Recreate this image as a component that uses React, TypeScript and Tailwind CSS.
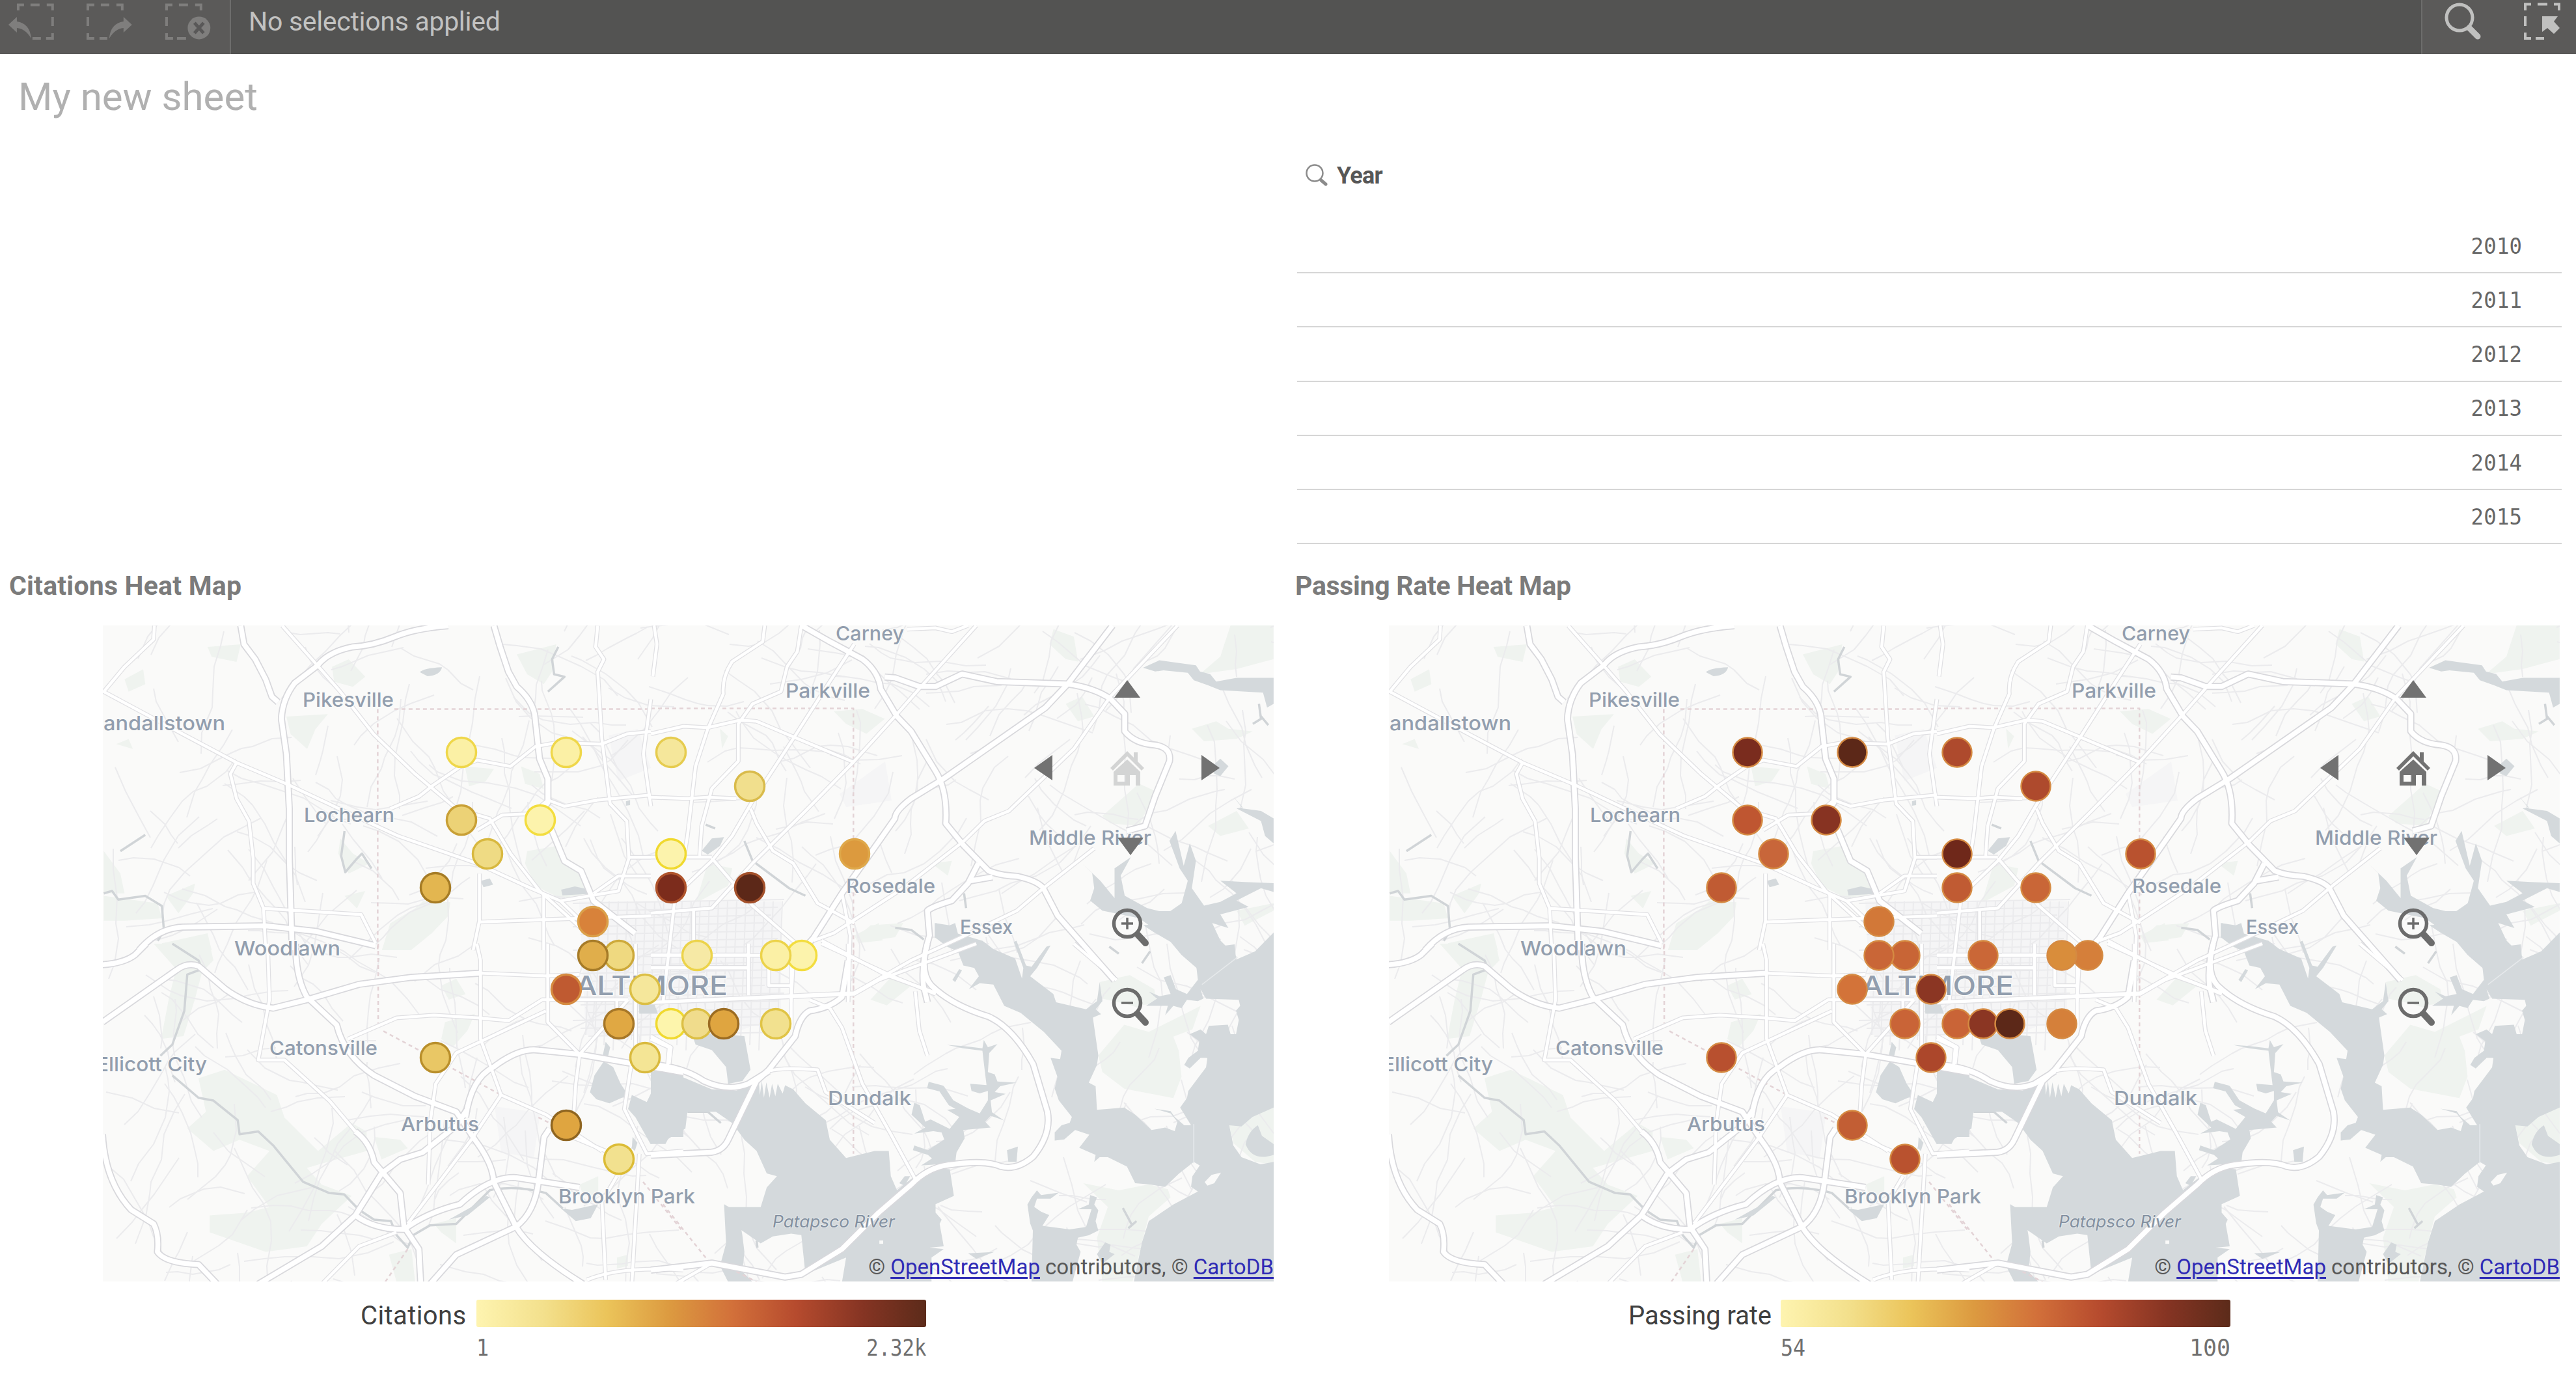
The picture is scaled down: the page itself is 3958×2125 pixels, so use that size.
import React from "react";

type Sheet = {
  t: string;
  major: string[];
  minor: string[];
  dashed: string[];
  water: string[];
  creek: string[];
  inlet: string[];
  green: string[];
};

/* The base map is stored as sheets, each with its own local units. */
const sheets: Sheet[] = [
  {
    t: "translate(0 860) scale(.63776 .38265)",
    major: [
      "M580 265L588 340L615 400L640 480L655 550L670 572",
      "M1080 265Q1000 275 950 310T850 350Q790 370 765 425L710 495Q680 560 678 640L690 780L697 1000V1200L704 1568",
      "M1190 265L1205 350L1225 450L1245 510Q1280 560 1288 620L1300 800L1320 880L1320 975L1305 1010L1330 1090L1360 1210L1400 1250L1430 1370L1530 1500",
      "M335 1568Q380 1480 440 1475L640 1470L760 1492L905 1550",
    ],
    minor: [
      "M372 265L370 320L300 430L250 530L440 700L570 815L690 900L830 1010L960 1110L1150 1220L1280 1320L1350 1370L1400 1450",
      "M680 265L765 425L820 530L900 700L1000 860L1100 1000L1180 1040L1230 1180L1300 1330L1400 1480",
      "M570 815L555 860L570 960L600 1050L610 1200V1300L635 1400L640 1568",
      "M635 1400L870 1425L905 1540",
      "M1440 265L1435 350L1455 400L1440 450L1450 720L1470 980L1510 1050L1515 1200L1490 1330L1420 1350L1350 1370",
      "M940 1000L1010 950L1040 910L1110 830L1150 805L1230 830L1290 750L1340 735L1450 740L1510 700L1568 690",
      "M1150 1085L1210 1025L1280 1020L1320 965L1360 990L1440 965L1568 945",
      "M1155 1260V1450L1140 1568",
      "M1155 1455L1310 1445L1568 1430M1310 1340V1568M1430 1340L1490 1270H1568M1515 1195H1568",
      "M1568 560L1550 780L1568 990",
    ],
    dashed: ["M950 600H1568", "M910 600V1568"],
    water: [
      "M1012 452Q1020 435 1065 432Q1060 465 1030 468Z",
      "M1352 1325L1385 1312L1420 1325V1342L1355 1348Z",
      "M1158 1290L1180 1280L1188 1305L1165 1315Z",
      "M1508 970L1518 965V985L1508 988Z",
    ],
    creek: [
      "M250 1340L270 1330L285 1365L350 1350L390 1390L395 1490L380 1530",
      "M830 1090L822 1190L832 1255L860 1200L872 1180L895 1240",
      "M1345 350L1330 400L1335 460L1360 470L1320 530",
      "M290 1170L350 1105",
    ],
    inlet: [],
    green: [
      "M500 350L580 340L570 410L510 390Z",
      "M800 430L840 400L880 470L850 510L805 490Z",
      "M1245 380L1340 340L1330 450L1310 500L1270 460Z",
      "M1270 1170L1340 1150L1380 1220L1420 1290V1340L1350 1360L1290 1310L1265 1220Z",
      "M1120 830L1190 840L1170 890L1130 910Z",
      "M1255 830L1300 860L1310 920L1265 900Z",
      "M940 1460L1000 1400L1020 1370L1085 1375L1080 1430L1040 1500L990 1568H920Z",
      "M250 1350L380 1380L390 1440L300 1450L250 1450Z",
      "M400 1350L470 1300L465 1340L430 1420Z",
      "M820 1120L850 1180L890 1220L840 1260L815 1180Z",
      "M690 630L790 620L760 680L740 760L700 700Z",
      "M390 1540L500 1500L510 1568H395Z",
      "M830 1350L880 1330L860 1400Z",
      "M300 480L345 440L350 500L310 530Z",
      "M280 740L310 720L320 760Z",
      "M250 1170L290 1260L300 1340H250Z",
    ],
  },
  {
    t: "translate(1000 940) scale(.625 .38265)",
    major: [
      "M370 55L440 120L520 190Q560 240 565 310L605 420L640 480L700 640Q730 720 725 850L770 940L830 1040Q860 1060 900 1062Q950 1080 965 1110L1000 1220L1140 1480",
      "M1135 55L1025 290L970 385L720 670L640 750Q600 800 600 830L540 970L470 1130L400 1310L350 1400",
      "M1025 290Q1090 305 1130 350L1165 410V480Q1190 530 1240 535Q1280 545 1275 600L1240 740L1215 860L1170 880",
      "M575 262L600 265L660 300H700L765 250L850 280L1025 290",
      "M805 1010L780 1090L740 1160Q690 1185 680 1200L685 1300Q665 1400 670 1500L680 1568",
      "M780 1082L840 1065",
    ],
    minor: [
      "M1295 55L1130 340L1040 550L880 800L820 840L770 920L620 1110L450 1290L400 1320",
      "M800 55L670 290L600 420L500 600L380 800L250 1010L150 1190L0 1210",
      "M280 55L275 120L200 200Q175 260 178 330L140 470L110 620L90 900L80 1000",
      "M370 55L360 160L335 220L320 320L250 370L215 450V600L150 710L125 860L120 980",
      "M0 490L80 460L140 465L220 435L260 440L500 605",
      "M0 745L90 750L140 745L210 750",
      "M500 130L440 280L350 510L250 760L200 900L150 1000L60 1140L30 1568",
      "M245 790L260 850L300 960L350 1010L410 1170L500 1250",
      "M470 1130L490 1300L485 1568",
      "M150 990L250 1180L370 1350M0 985H150",
      "M1090 950L965 1110L900 1200L760 1310L640 1400L500 1530L0 1568",
      "M420 1320L580 1460L700 1530",
      "M630 70L700 65L740 80L780 55M8 55L15 130L5 260",
      "M0 1380H340M0 1430H240M240 1370V1540M350 1400L345 1568M105 1200V1320",
    ],
    dashed: ["M0 388H498V1568"],
    water: [
      "M1210 225L1250 195L1340 215L1350 240L1375 250L1390 280L1440 265H1531V370L1515 385L1505 325L1400 315L1370 295L1335 275L1320 245L1260 235L1240 240Z",
      "M1431 740L1455 790L1500 800L1531 830V930L1510 900L1500 840L1440 790L1455 785Z",
      "M1060 1010L1085 1050L1090 1110L1080 1160L1110 1200L1200 1230L1260 1300L1330 1360L1340 1420L1350 1480L1440 1385L1400 1320L1380 1250L1420 1270L1400 1215L1470 1185L1440 1160L1500 1110L1531 1125V1090L1460 1085L1400 1080L1440 1130L1400 1165L1360 1180L1330 1110L1340 1000L1325 930L1310 1020L1290 880L1275 920L1300 1030L1320 1080L1305 1170L1270 1210L1220 1190L1165 1140L1155 1060L1180 985L1140 1030L1140 1150L1105 1080Z",
      "M700 1250L745 1270L742 1310L700 1310Z",
      "M125 960L150 910L180 905L170 940L140 975Z",
      "M1380 620L1400 590L1420 620L1400 660L1385 650Z",
    ],
    creek: [
      "M1495 370L1500 430L1480 450M1500 420L1518 455",
      "M135 855L158 870M230 920L250 1000L340 1110L380 1140",
      "M770 1130L775 1190",
    ],
    inlet: [],
    green: [
      "M990 70L1040 100L1050 200L1020 190L980 130Z",
      "M1425 55H1531V190L1440 230L1350 250L1400 180Z",
      "M450 400L520 390L575 430L530 490L480 450Z",
      "M1330 470L1390 440L1420 470L1480 480L1440 510L1360 520Z",
      "M1110 820L1200 690L1240 720L1200 860L1130 850Z",
      "M1370 860L1440 800L1470 870L1400 900Z",
      "M1020 370L1060 340L1090 420L1050 440Z",
      "M500 1300L560 1250L570 1320L510 1330Z",
      "M140 1010L200 1030L190 1100L110 1170Z",
      "M170 470L190 500L175 550Z",
      "M690 1010L740 1000L730 1060Z",
      "M1440 1200L1531 1170V1200L1460 1260Z",
    ],
  },
  {
    t: "translate(150 1450) scale(.57398 .43048)",
    major: [
      "M13 75Q70 70 100 40L130 0",
      "M530 0Q530 120 560 190L640 290Q660 400 740 470L850 545L960 600L1010 700Q1060 790 1060 850L1120 1010Q1160 1100 1300 1215",
      "M985 620Q1000 480 1060 440Q1130 370 1180 380L1290 395L1440 430L1568 460",
      "M430 1215L600 1080L690 970L760 820L810 770L870 745L960 650L990 590",
      "M690 670Q730 710 740 780L810 890L820 1010L860 1090L865 1215",
      "M690 970Q740 1020 820 1020Q880 960 970 930Q1050 830 1120 835L1290 870",
      "M13 680Q20 850 90 950L150 1000Q165 1040 160 1100Q180 1140 270 1145L320 1215",
      "M890 1215L960 1110L1120 1010Q1170 960 1180 850L1195 690L1210 660",
      "M13 280L210 95Q240 65 270 80L340 160Q400 220 470 230L560 200L700 145L840 120L1025 105",
    ],
    minor: [
      "M1025 105L1200 115L1290 110M455 0L460 200L430 415L500 415L620 560L690 670",
      "M1290 400L1280 500L1275 600M1290 395L1420 200",
      "M1015 0L1025 60V340L1080 540L1200 610L1350 740",
      "M670 340L800 265L900 255L1020 265L1100 275L1190 200H1420",
      "M830 1000L1000 700L1060 580L1080 540M885 860L890 640L905 500L960 390L1200 240",
      "M1430 420L1410 590L1470 750L1568 740",
      "M1390 830L1350 920L1360 1200M1450 750L1430 1215M1310 1200Q1400 1150 1568 1165",
      "M1205 0V280L1290 395M600 1215L700 1080L800 1030",
      "M1360 740L1270 690M1480 340L1530 370L1525 440",
      "M1440 0V420M1390 200V340",
    ],
    dashed: ["M751 0V300", "M765 312L860 380L1080 540M1180 620L1210 640", "M1460 850L1568 1030", "M830 1090L770 1207"],
    water: [
      "M1330 470L1355 420L1380 440L1400 500L1420 540L1370 570L1335 555L1318 530Z",
      "M1500 440L1568 470V690L1530 690L1520 715L1480 715L1440 620L1420 590L1430 540L1470 565L1490 510L1480 470Z",
      "M1448 200L1490 215L1500 250L1450 250Z",
      "M1240 945L1270 950L1340 930L1320 980L1280 990Z",
      "M1360 350L1372 370L1365 410L1352 400Z",
      "M940 985L1000 940L1040 900L1050 905L990 970Z",
      "M1432 690L1445 710L1438 740L1430 730Z",
    ],
    creek: [
      "M200 0L270 60L280 90L240 110L232 240L200 360L168 400M200 470L270 550L310 560L375 630L380 680L430 670L470 720L550 850L620 890L660 895L700 950L740 985L785 990L800 1040L830 1085L845 1040L890 1005L960 1000L1050 880Q1120 860 1200 890L1245 945",
    ],
    inlet: [],
    green: [
      "M150 0H300L310 60L280 100L260 200L230 330L170 340L190 200L210 90Z",
      "M270 480L340 450L480 540L500 620L590 740L680 640L720 670L720 740L560 800L600 860L680 900L600 1000L560 1080L450 1100L300 1030L300 970L400 960L460 940L400 830L460 740L380 700L310 740L240 660L290 600Z",
      "M930 280L1010 250L990 310L950 370L920 340Z",
      "M920 150L960 125L985 180L940 200Z",
      "M740 690L810 700L830 730L760 770Z",
      "M1290 860L1340 830L1340 900L1300 900Z",
      "M900 1000L960 980L960 1070L920 1030Z",
      "M780 1110L840 1090L850 1207H800Z",
      "M1390 1120L1420 1110V1150L1390 1160Z",
    ],
  },
  {
    t: "translate(1000 1450) scale(.625 .43048)",
    major: [
      "M680 0Q660 100 690 150Q740 220 830 260Q890 300 940 430L975 600Q985 680 940 760Q900 810 860 795Q820 770 730 790Q680 800 640 860L560 960L470 1090L370 1180L330 1190L150 1140L0 1165",
      "M485 60L470 190Q440 230 390 240Q365 260 355 330L290 450L260 490L190 700Q175 745 140 745L0 755",
      "M0 430Q80 440 130 490Q190 530 240 500L290 455",
    ],
    minor: [
      "M290 455Q320 440 410 450L430 530L550 640M440 230L470 300L520 500L590 680L650 840",
      "M0 210L500 180L560 130L800 0M420 0L600 120L700 180M650 170L660 310L680 400",
      "M0 85H240V0M0 40H80M160 40H240M345 0V300M290 70V150H345",
      "M1040 0L1145 130M485 0V80M0 330L50 370L45 430",
      "M150 1140L60 1215M390 200L440 230",
    ],
    dashed: ["M498 0V750", "M30 930L140 1130", "M210 1170L260 1207"],
    water: [
      "M0 455L60 465L150 520L210 525L265 480L268 540L273 490L278 550L284 495L292 550L298 500L306 545L312 500L324 535L330 505L350 520L380 570L430 630L440 700L480 765L550 740L585 740L590 830L605 880L640 840L690 800L735 805L745 900L700 930L700 960L715 985L710 1000L720 1080L685 1085L720 1090L690 1120V1207H470L480 1120L430 1150L380 1180L370 1040L345 1035L300 1045L270 1070L220 1020L180 940L270 940L285 870L310 830L285 820L260 740L230 700L200 640L160 600H90L85 660L50 690L40 700L0 715Z",
      "M105 340L150 320L230 330L245 450L225 490L190 500L185 440L150 380L110 360Z",
      "M180 930L215 960L225 1040L230 1100L225 1170L250 1207H190L170 1150L185 1070Z",
      "M780 1105L845 1100L800 1125Z",
    ],
    creek: ["M260 1060L262 1085", "M90 600H140L172 640"],
    inlet: [],
    green: ["M540 200L590 120L640 150L580 220Z", "M1160 160L1230 180L1200 230L1160 210Z"],
  },
  {
    t: "translate(1300 1400) scale(.419 .36352)",
    major: [],
    minor: [],
    dashed: [],
    water: [
      "M325 50L325 110L370 150L410 170L430 230L470 240L487 275L450 330L490 305L540 310L580 400L640 430L725 510L790 590L785 625L750 620L775 700L765 750L780 800L828 870L820 895L790 905L765 935V970L800 965L840 925L892 945L855 1000L875 1010L915 1030L910 1060L930 1040L960 1040L1030 1080L1060 1150L1110 1155L1170 1165L1220 1110L1275 1060L1297 1075L1270 1120L1265 1165L1290 1185L1200 1240L1110 1310L1085 1400L1055 1568H1568V1060L1520 1070L1450 1040L1420 990L1405 905L1450 910L1490 870L1568 830V90L1500 170L1430 205L1425 140L1360 150L1330 60L1290 0H1130L1170 50L1090 60L1130 90L1190 130L1230 185L1285 240L1290 290L1270 320L1250 350L1210 330L1190 270L1165 280L1190 350L1150 360L1110 340L1140 370L1100 400H1180L1170 440L1200 400L1230 410L1250 375L1290 380L1310 370L1300 330L1320 370L1440 375L1445 400L1430 420L1440 460L1430 520L1410 520L1400 480L1330 485L1320 520L1300 500L1260 520L1295 550L1290 590L1255 620L1240 650L1260 665L1300 620H1325L1320 660L1255 760L1250 790L1225 830L1265 905H1240L1205 870L1190 845L1130 835L1190 855L1215 890L1205 930L1170 915L1120 925L1060 860L1020 830L920 840L915 740L890 725L920 650L925 610L905 450L935 435L915 415L940 380L930 300L920 380L880 415L770 385L760 350L675 275L700 240L750 145L735 150L680 235L660 230L625 125L615 130L650 240L645 285L620 200L540 160L500 125L410 95L400 50L380 60Z",
      "M1465 985Q1475 930 1510 905L1525 950L1568 985V1030Q1490 1060 1465 985Z",
      "M370 565L430 570L500 580L505 545L520 575L555 562L525 600L520 680L545 690L555 720L625 725L565 740L545 765L585 772L530 800L535 850L580 885L530 865L510 890L530 915L430 925L435 960L405 1020L400 1065L275 1075L315 1045L300 1030L245 1010L250 990L300 1010L360 965L350 935L320 930L250 940L290 915L240 860L250 810L270 820L290 890L310 880L380 920L415 870L370 840L440 830L490 855L520 800L520 760L490 770L460 760L455 730L515 735L505 640L500 590L430 580Z",
      "M700 1180L715 1200L780 1190L750 1215H700L690 1250L715 1270L745 1285L720 1330L820 1345L880 1335L900 1260H850L890 1240L895 1200L920 1210L910 1240L925 1265L915 1310L925 1350L890 1370L850 1380L845 1410L860 1440L830 1568H680L685 1350L675 1320L665 1240L680 1210Z",
      "M590 1010L630 995L625 1060H595Z",
      "M390 290L415 245L425 250L400 300Z",
      "M950 1400L970 1410L965 1440L985 1450L940 1490L920 1450Z",
      "M195 1150L215 1120H235L215 1160Z",
    ],
    creek: ["M1015 1255L1050 1330M1065 1310L1035 1340", "M965 150L1000 180M1085 220L1115 170M180 70L240 80L285 120"],
    inlet: ["M300 735L350 750L385 810L440 845"],
    green: [
      "M925 610L1020 480L1110 510L1250 430L1300 400L1270 500L1200 530L1220 590L1230 700L1200 790L1110 770L1020 750L940 680Z",
      "M870 1150L1000 1180L1110 1155L1180 1175L1190 1210L1110 1290L1085 1400L1050 1568H940L920 1380L960 1250Z",
      "M1405 905L1568 830V1070L1500 1060L1420 980Z",
      "M930 300L1040 270L1130 330L1140 390L1060 400L940 370Z",
      "M40 110L90 60L210 50L180 110L60 130Z",
    ],
  },
];

/* Islands and causeways drawn back over the water. */
const land = ["M1315 1145L1340 1115L1375 1105L1350 1150L1325 1160Z", "M122 1392h14v14h-14z"];

/* Residential street texture: deterministic wandering polylines. */
function buildStreets(): string[] {
  let s = 4711;
  const r = () => {
    s = (s * 1103515245 + 12345) % 2147483648;
    return s / 2147483648;
  };
  const out: string[] = [];
  for (let i = 0; i < 420; i++) {
    let x = 158 + r() * 1799;
    let y = 961 + r() * 1008;
    let a = (r() < 0.5 ? 0.9 : -0.65) + (r() - 0.5) * 1.4;
    let d = `M${x.toFixed(0)} ${y.toFixed(0)}`;
    const n = 3 + Math.floor(r() * 5);
    for (let k = 0; k < n; k++) {
      a += (r() - 0.5) * 0.7;
      const l = 15 + r() * 30;
      x += Math.cos(a) * l;
      y += Math.sin(a) * l;
      d += `L${x.toFixed(0)} ${y.toFixed(0)}`;
    }
    out.push(d);
  }
  for (let i = 0; i < 22; i++) {
    const x = 900 + i * 14;
    out.push(`M${x + 8} 1385L${x} ${1590 + (i % 4) * 8}`);
  }
  for (let i = 0; i < 18; i++) out.push(`M${880 + (i % 3) * 12} ${1388 + i * 12}L${1205 - (i % 4) * 10} ${1382 + i * 12}`);
  return out;
}
const streets = buildStreets();

const places: [string, number, number, number][] = [
  ["Pikesville", 465, 1086, 140],
  ["Carney", 1284, 984, 105],
  ["Parkville", 1207, 1072, 130],
  ["andallstown", 159, 1122, 187],
  ["Lochearn", 467, 1263, 139],
  ["Middle River", 1581, 1298, 188],
  ["Rosedale", 1300, 1372, 137],
  ["Essex", 1475, 1435, 81],
  ["Woodlawn", 360, 1468, 163],
  ["Catonsville", 414, 1621, 166],
  ["Ellicott City", 148, 1646, 170],
  ["Arbutus", 616, 1738, 120],
  ["Dundalk", 1272, 1698, 128],
  ["Brooklyn Park", 858, 1849, 210],
];

type Dot = [number, number, string, string, string];
const dots: Dot[] = [
  [709, 1156, "#fbf0a5", "#efd74a", "#7a2c1e"],
  [870, 1156, "#fbf0a5", "#efd74a", "#5c2818"],
  [1031, 1156, "#f5e79b", "#e6cc4f", "#ae4a2d"],
  [1152, 1208, "#f1df8d", "#d9bb4b", "#ae4a2d"],
  [709, 1260, "#ecd276", "#c9a036", "#bf5631"],
  [830, 1260, "#fcf3ac", "#f3dd3f", "#873322"],
  [749, 1312, "#efdb84", "#d8b83f", "#c8663a"],
  [1031, 1312, "#fcf3ac", "#f0d92f", "#6f281a"],
  [1313, 1312, "#dc9a3e", "#dfa84a", "#b9522f"],
  [669, 1364, "#e3b650", "#a67c25", "#c05b33"],
  [1031, 1364, "#7c2c1c", "#b0542c", "#c05b33"],
  [1152, 1364, "#5c2818", "#a3502a", "#c96637"],
  [911, 1416, "#d8823a", "#dba04a", "#d27838"],
  [951, 1468, "#efd980", "#cda93a", "#c86536"],
  [911, 1468, "#e0ae4b", "#a67b28", "#c96637"],
  [1071, 1468, "#f6e9a5", "#ecd34a", "#ca6737"],
  [1232, 1468, "#fcf3ac", "#f3dd3f", "#d57f3a"],
  [1192, 1468, "#fbf0a5", "#ecd34a", "#d98d3b"],
  [870, 1520, "#bf5a31", "#d58a3f", "#d37339"],
  [991, 1520, "#f5e79b", "#dcbf45", "#8b3623"],
  [951, 1573, "#e0a843", "#a67728", "#c96437"],
  [1031, 1573, "#fdf5ac", "#f0d92f", "#c96437"],
  [1071, 1573, "#f0dc8c", "#dcbf45", "#8b3623"],
  [1112, 1573, "#dfa540", "#9c6c22", "#5c2818"],
  [1192, 1573, "#f2e18f", "#e0c446", "#d5803a"],
  [669, 1625, "#e9c765", "#b98f2b", "#b8502f"],
  [991, 1625, "#f4e595", "#d9ba3f", "#ac472b"],
  [870, 1729, "#dfa540", "#8f6520", "#c25e34"],
  [951, 1781, "#f2e18f", "#dcbc36", "#b9522f"],
];

function Paths({ pick, ...p }: { pick: keyof Omit<Sheet, "t"> } & React.SVGProps<SVGPathElement>) {
  return (
    <>
      {sheets.map((s) => (
        <g key={s.t} transform={s.t}>
          {s[pick].map((d) => (
            <path key={d} d={d} vectorEffect="non-scaling-stroke" {...p} />
          ))}
        </g>
      ))}
    </>
  );
}

function Lens({ cy, plus }: { cy: number; plus?: boolean }) {
  return (
    <g fill="none" stroke="#6c6c6c">
      <circle cx="1732" cy={cy} r="20.500" strokeWidth="5.500" />
      <path d={`M1748 ${cy + 17}L1760 ${cy + 30}`} strokeWidth="10" strokeLinecap="round" />
      <path d={`M1723 ${cy}H1741${plus ? `M1732 ${cy - 9}V${cy + 9}` : ""}`} strokeWidth="3.500" />
    </g>
  );
}

function HeatMap({ citations }: { citations: boolean }) {
  return (
    <svg className="block h-[1008px] w-[1799px]" viewBox="158 961 1799 1008" strokeLinejoin="round">
      <rect x="158" y="961" width="1799" height="1008" fill="#fafaf9" />
      <Paths pick="green" fill="#eff3ef" />
      <g fill="#f5f5f6">
        <path d="M890 1385H1200V1560L1120 1590H900Z" />
        <path d="M935 1130L980 1120L1000 1180L950 1200ZM1290 1220L1360 1170L1370 1230L1300 1240ZM760 1700L830 1710L820 1780L770 1770Z" />
      </g>
      <g fill="none" stroke="#ebebed" strokeWidth="2">
        {streets.map((d) => (
          <path key={d} d={d} />
        ))}
      </g>
      <Paths pick="creek" fill="none" stroke="#d0d4d7" strokeWidth="3.500" />
      <Paths pick="inlet" fill="none" stroke="#d4d9dc" strokeWidth="10" />
      <Paths pick="water" fill="#d4d9dc" />
      <g transform={sheets[4].t} fill="#fafaf9">
        {land.map((d) => (
          <path key={d} d={d} />
        ))}
        <path d="M1275 900V1065M1305 310L1435 195" fill="none" stroke="#e6e9eb" strokeWidth="4" />
      </g>
      <Paths pick="dashed" fill="none" stroke="#e3d3d6" strokeWidth="2.500" strokeDasharray="6 5" />
      <Paths pick="minor" fill="none" stroke="#e0e0e3" strokeWidth="7" />
      <Paths pick="major" fill="none" stroke="#d8d8dc" strokeWidth="11" />
      <Paths pick="minor" fill="none" stroke="#ffffff" strokeWidth="4.500" />
      <Paths pick="major" fill="none" stroke="#ffffff" strokeWidth="7.500" />
      <g className="font-['Inter'] font-medium" fill="#929eae" stroke="#fafaf9" strokeWidth="3" paintOrder="stroke" fontSize="30">
        {places.map(([name, x, y, w]) => (
          <text key={name} x={x} y={y} textLength={w} lengthAdjust="spacingAndGlyphs">
            {name}
          </text>
        ))}
        <text x="854" y="1529" fontSize="41" textLength="264" lengthAdjust="spacingAndGlyphs">
          BALTIMORE
        </text>
        <text x="1187" y="1886" fontSize="25" fontStyle="italic" fontWeight="400" fill="#8390a0" stroke="#e4e8ea" strokeWidth="2" textLength="188" lengthAdjust="spacingAndGlyphs">
          Patapsco River
        </text>
      </g>
      {dots.map(([x, y, fill, ring, rate]) => (
        <circle key={`${x}-${y}`} cx={x} cy={y} r="22.500" fill={citations ? fill : rate} stroke={citations ? ring : "#d58a42"} strokeWidth={citations ? 3.5 : 2.5} />
      ))}
      <g fill="#727272">
        <path d="M1732 1045L1752 1072H1712Z" />
        <path d="M1589 1180L1617 1160V1199Z" />
        <path d="M1874 1180L1846 1160V1199Z" />
        <path d="M1737 1314L1717 1287H1757Z" />
      </g>
      <g fill={citations ? "#d3d4d4" : "#727272"}>
        <path d="M1732 1154L1742 1164V1156H1748V1170L1758 1180L1754 1184L1732 1162L1710 1184L1706 1180Z" />
        <path d="M1732 1167L1752 1186V1207H1745V1191H1736V1207H1711V1186ZM1717 1191V1201H1729V1191Z" fillRule="evenodd" />
      </g>
      <Lens cy={1419} plus />
      <Lens cy={1541} />
    </svg>
  );
}

function Panel({ title, legend, low, high, citations }: { title: string; legend: string; low: string; high: string; citations: boolean }) {
  return (
    <section className="flex flex-col">
      <h2
        className={
          citations
            ? "h-[101px] pl-[14px] pt-[14px] text-[41px] leading-[52px] font-bold tracking-[0.2px] whitespace-nowrap text-[#7b7b7b]"
            : "h-[101px] pl-[14px] pt-[14px] text-[41px] leading-[52px] font-bold tracking-[-0.3px] whitespace-nowrap text-[#7b7b7b]"
        }
      >
        {title}
      </h2>
      <div className="relative ml-[158px] w-[1799px]">
        <HeatMap citations={citations} />
        <p className="absolute right-0 bottom-0 flex items-baseline gap-[8px] text-[33px] leading-[44px] tracking-[0.04px] whitespace-nowrap text-[#585858]">
          <span>©</span>
          <a className="text-[#2f2bb5] underline decoration-[3px] underline-offset-[4px]">OpenStreetMap</a>
          <span>contributors, ©</span>
          <a className="text-[#2f2bb5] underline decoration-[3px] underline-offset-[4px]">CartoDB</a>
        </p>
      </div>
      <div className={citations ? "mt-[28px] ml-[554px] flex" : "mt-[28px] ml-[526px] flex"}>
        <span className={citations ? "w-[178px] pt-[2px] text-[40px] leading-[46px] tracking-[0.4px] whitespace-nowrap text-[#404040]" : "w-[234px] pt-[2px] text-[40px] leading-[46px] tracking-[-0.1px] whitespace-nowrap text-[#404040]"}>{legend}</span>
        <div className="w-[691px]">
          <div className="h-[42px] rounded-[3px] bg-[linear-gradient(90deg,#fef4b0_0%,#f3e08c_15%,#ebc45a_29%,#dc9a40_43%,#d2703a_57%,#b64b2e_71%,#853423_86%,#5c2b1a_100%)]" />
          <div className="mt-[12px] flex justify-between font-['DejaVu_Sans_Mono'] text-[36px] leading-[40px] text-[#707070]">
            <span className="origin-left scale-x-[0.88]">{low}</span>
            <span className={citations ? "origin-right scale-x-[0.85]" : "origin-right scale-x-[0.97]"}>{high}</span>
          </div>
        </div>
      </div>
    </section>
  );
}

function HeaderTool({ kind }: { kind: "back" | "forward" | "clear" }) {
  return (
    <svg className="h-[83px] w-[118px]" viewBox="0 0 118 83" fill="none">
      {kind === "back" && (
        <g>
          <path d="M28 16V7.500H37M47 7.500H61M72 7.500H81V16M81 26V40M81 51V59H71M63 59H50" stroke="#7f7e7d" strokeWidth="4" />
          <path d="M13 38L26 26V33Q46 36 48 59Q39 44 26 43V50Z" fill="#7f7e7d" />
        </g>
      )}
      {kind === "forward" && (
        <g>
          <path d="M17 16V7.500H27M37 7.500H50M61 7.500H70V16M17 26V40M17 51V59H27M35 59H47" stroke="#7f7e7d" strokeWidth="4" />
          <path d="M85 38L72 26V33Q52 36 50 59Q59 44 72 43V50Z" fill="#7f7e7d" />
        </g>
      )}
      {kind === "clear" && (
        <g>
          <path d="M21 16V7.500H30M40 7.500H54M65 7.500H74V16M21 26V40M21 51V59H31M37 59H51" stroke="#7f7e7d" strokeWidth="4" />
          <circle cx="71" cy="43" r="17.500" fill="#7f7e7d" />
          <path d="M64 35L78 51M78 35L64 51" stroke="#595858" strokeWidth="5" />
        </g>
      )}
    </svg>
  );
}

const years = ["2010", "2011", "2012", "2013", "2014", "2015"];

export default function App() {
  return (
    <div className="h-[2125px] w-[3958px] overflow-hidden bg-white font-['Roboto',sans-serif]">
      <header className="flex h-[83px] bg-[#535352]">
        <div className="flex w-[355px] border-r-2 border-[#6d6d6c] bg-[#5b5a59]">
          <HeaderTool kind="back" />
          <HeaderTool kind="forward" />
          <HeaderTool kind="clear" />
        </div>
        <div className="flex-1 pl-[27px] text-[41px] leading-[66px] tracking-[-0.3px] whitespace-nowrap text-[#c2c2c1]">No selections applied</div>
        <div className="flex w-[238px] border-l-2 border-[#6d6d6c] bg-[#5b5a59]">
          <svg className="h-[83px] w-[236px]" viewBox="3722 0 236 83" fill="none" stroke="#c0c0bf">
            <circle cx="3779" cy="27" r="20" strokeWidth="5" />
            <path d="M3794 43L3807 56" strokeWidth="9" strokeLinecap="round" />
            <path d="M3880 16V6.500H3889M3899 6.500H3914M3924 6.500H3932V16M3880 25V40M3880 50V59H3889M3896 59H3909" strokeWidth="4" />
            <path d="M3906 25H3930L3924 33L3933 43L3924 52L3914 43L3906 49Z" fill="#c0c0bf" stroke="none" />
          </svg>
        </div>
      </header>
      <div className="h-[137px] pt-[28px] pl-[28px] text-[60px] leading-[76px] whitespace-nowrap text-[#b0b0b0]">My new sheet</div>
      <main className="grid grid-cols-[1976px_1982px] grid-rows-[640px_1265px]">
        <div />
        <section className="pl-[17px]">
          <div className="flex h-[117px] items-start pt-[26px] pl-[11px]">
            <svg className="mt-[4px] h-[40px] w-[50px]" viewBox="0 0 50 40" fill="none" stroke="#8b8b8b">
              <circle cx="16" cy="16" r="12.500" strokeWidth="2.500" />
              <path d="M26 27L33 33" strokeWidth="5" strokeLinecap="round" />
            </svg>
            <h3 className="text-[36px] leading-[48px] font-bold tracking-[-0.8px] text-[#575757]">Year</h3>
          </div>
          <ul className="w-[1943px]">
            {years.map((y) => (
              <li key={y} className="flex h-[83.2px] items-center justify-end border-b-[2px] border-[#d6d6d6] pt-[2px] pr-[61px] font-['DejaVu_Sans_Mono'] text-[33px] tracking-[0.2px] text-[#666666]">
                <span className="origin-right scale-x-[0.98]">{y}</span>
              </li>
            ))}
          </ul>
        </section>
        <Panel title="Citations Heat Map" legend="Citations" low="1" high="2.32k" citations />
        <Panel title="Passing Rate Heat Map" legend="Passing rate" low="54" high="100" citations={false} />
      </main>
    </div>
  );
}
